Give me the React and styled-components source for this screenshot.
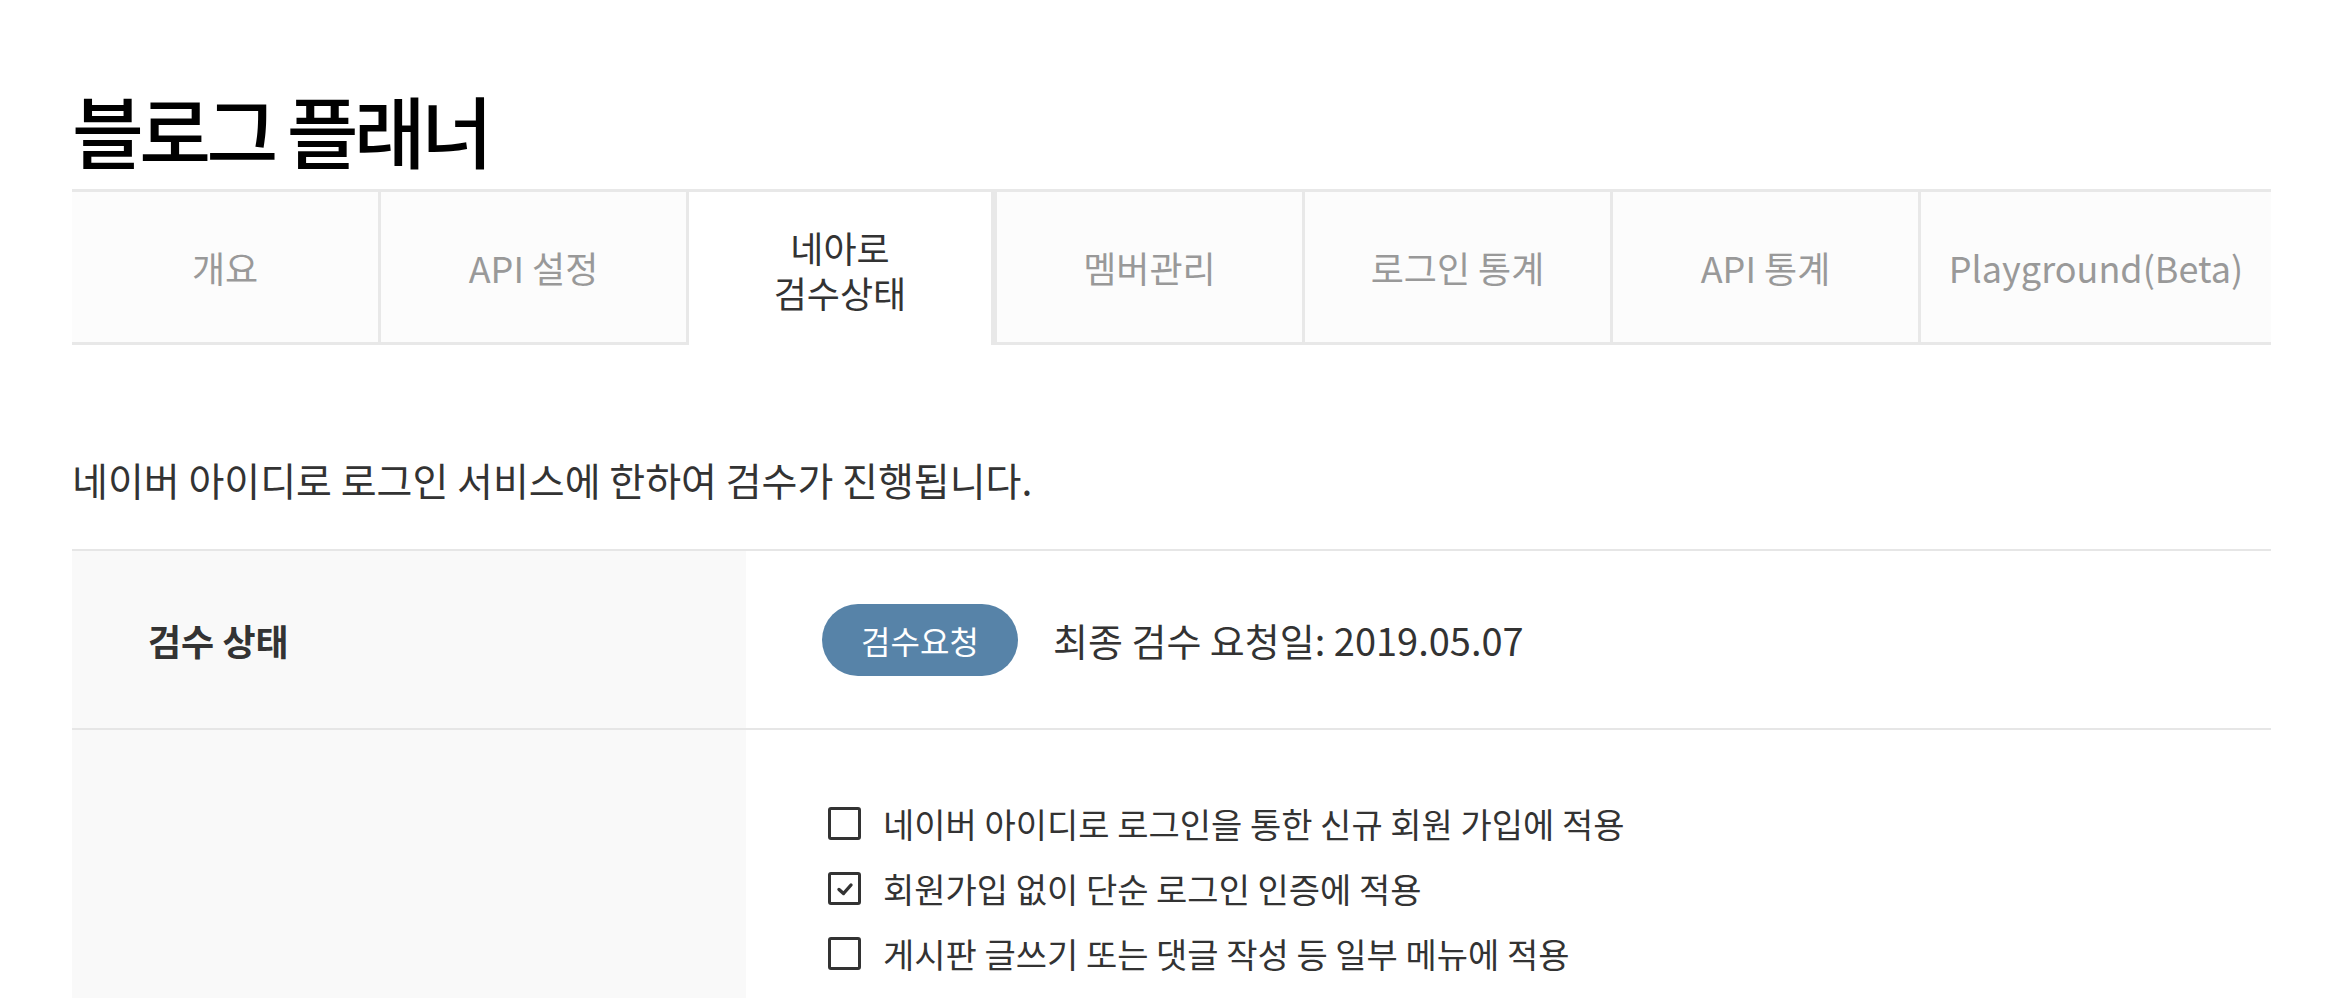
import React from "react";
import styled, { createGlobalStyle } from "styled-components";

const GlobalStyle = createGlobalStyle`
  html, body {
    margin: 0;
    padding: 0;
    background: #ffffff;
  }
  body {
    font-family: "Noto Sans CJK KR", "Noto Sans", sans-serif;
    color: #333333;
  }
`;

const tabs = [
  { label: "개요" },
  { label: "API 설정" },
  { label: ["네아로", "검수상태"], active: true },
  { label: "멤버관리" },
  { label: "로그인 통계" },
  { label: "API 통계" },
  { label: "Playground(Beta)" },
];

const options = [
  { text: "네이버 아이디로 로그인을 통한 신규 회원 가입에 적용", checked: false },
  { text: "회원가입 없이 단순 로그인 인증에 적용", checked: true },
  { text: "게시판 글쓰기 또는 댓글 작성 등 일부 메뉴에 적용", checked: false },
];

function App() {
  return (
    <>
      <GlobalStyle />
      <Page>
        <Title>블로그 플래너</Title>
        <TabBar>
          {tabs.map((tab, i) => (
            <Tab key={i} $active={tab.active} $first={i === 0} $last={i === tabs.length - 1}>
              {Array.isArray(tab.label)
                ? tab.label.map((line) => <TabLine key={line}>{line}</TabLine>)
                : tab.label}
            </Tab>
          ))}
        </TabBar>
        <Description>네이버 아이디로 로그인 서비스에 한하여 검수가 진행됩니다.</Description>
        <Table>
          <Row>
            <HeadCell>검수 상태</HeadCell>
            <BodyCell>
              <StatusPill>검수요청</StatusPill>
              <StatusDate>최종 검수 요청일: 2019.05.07</StatusDate>
            </BodyCell>
          </Row>
          <Row>
            <HeadCell />
            <OptionList>
              {options.map((opt) => (
                <OptionItem key={opt.text}>
                  <CheckBox $checked={opt.checked}>
                    {opt.checked && (
                      <svg width="22" height="18" viewBox="0 0 22 18">
                        <path
                          d="M5 9.5 L9.5 13.5 L17 5"
                          fill="none"
                          stroke="#333"
                          strokeWidth="3.4"
                          strokeLinecap="round"
                          strokeLinejoin="round"
                        />
                      </svg>
                    )}
                  </CheckBox>
                  <OptionText>{opt.text}</OptionText>
                </OptionItem>
              ))}
            </OptionList>
          </Row>
        </Table>
      </Page>
    </>
  );
}

const Page = styled.div`
  padding: 0 72px;
`;

const Title = styled.h1`
  margin: 0;
  padding: 79px 0 10px;
  font-size: 78px;
  line-height: 100px;
  font-weight: 500;
  color: #000;
  letter-spacing: -4.5px;
`;

const TabBar = styled.div`
  display: flex;
  border-top: 3px solid #e8e8e8;
  height: 153px;
`;

const Tab = styled.div`
  flex: ${(p) => (p.$last ? "1 1 auto" : p.$first ? "0 0 306px" : "0 0 308px")};
  box-sizing: border-box;
  display: flex;
  flex-direction: column;
  align-items: center;
  justify-content: center;
  border-left: ${(p) => (p.$first ? "none" : "3px solid #e8e8e8")};
  border-right: ${(p) => (p.$active ? "3px solid #e8e8e8" : "none")};
  border-bottom: ${(p) => (p.$active ? "none" : "3px solid #e8e8e8")};
  padding-top: ${(p) => (p.$active ? "3px" : "0")};
  background: ${(p) => (p.$active ? "#ffffff" : "#fcfcfc")};
  color: ${(p) => (p.$active ? "#333333" : "#999999")};
  font-size: 36px;
  line-height: 45px;
  white-space: nowrap;
`;

const TabLine = styled.span`
  display: block;
`;

const Description = styled.p`
  margin: 107px 0 43px;
  font-size: 39px;
  line-height: 54px;
  color: #333;
`;

const Table = styled.div`
  border-top: 2px solid #e6e6e6;
`;

const Row = styled.div`
  display: grid;
  grid-template-columns: 674px 1fr;
  border-bottom: 2px solid #e6e6e6;
`;

const HeadCell = styled.div`
  background: #f9f9f9;
  display: flex;
  align-items: center;
  padding-left: 76px;
  font-size: 36px;
  font-weight: 700;
  color: #333;
`;

const BodyCell = styled.div`
  height: 177px;
  display: flex;
  align-items: center;
  padding-left: 76px;
  gap: 35px;
`;

const StatusPill = styled.span`
  display: inline-flex;
  align-items: center;
  justify-content: center;
  width: 196px;
  height: 72px;
  border-radius: 36px;
  background: #5783a8;
  color: #fff;
  font-size: 32px;
`;

const StatusDate = styled.span`
  font-size: 38px;
  color: #333;
`;

const OptionList = styled.div`
  padding: 61px 0 120px 82px;
  display: flex;
  flex-direction: column;
`;

const OptionItem = styled.div`
  height: 65px;
  display: flex;
  align-items: center;
  gap: 22px;
`;

const CheckBox = styled.span`
  flex: 0 0 auto;
  width: 33px;
  height: 33px;
  box-sizing: border-box;
  border: 3px solid #333;
  border-radius: 3px;
  display: inline-flex;
  align-items: center;
  justify-content: center;
`;

const OptionText = styled.span`
  font-size: 34px;
  color: #333;
`;

export default App;
